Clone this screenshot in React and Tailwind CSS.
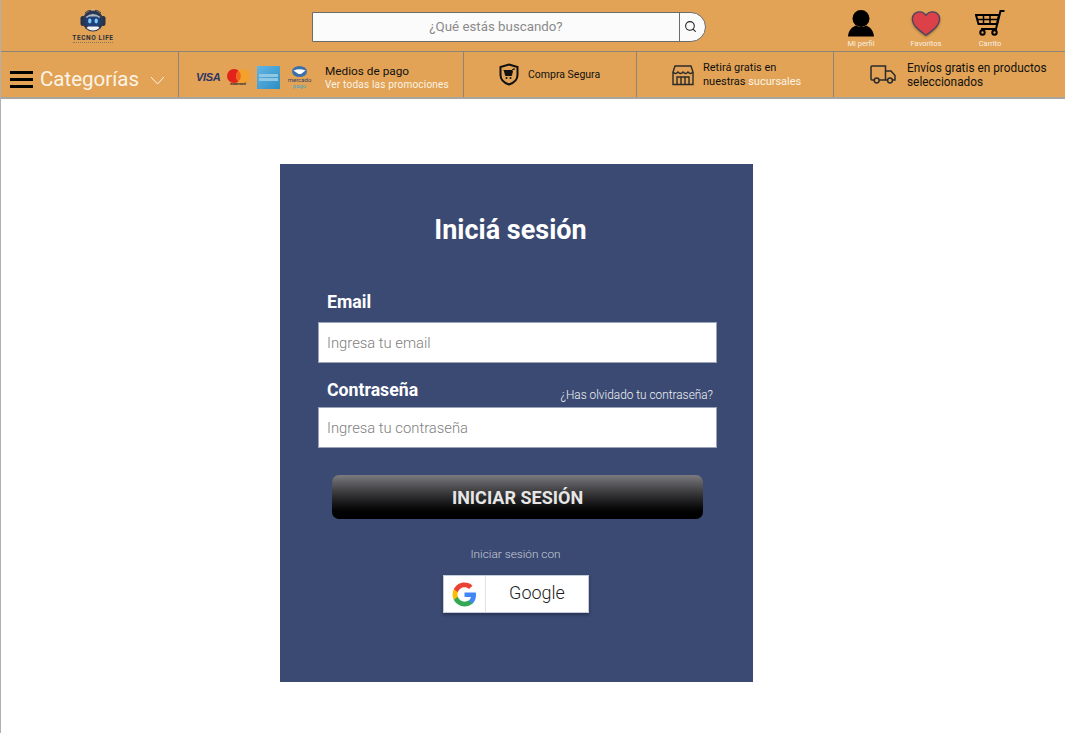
import { Search } from 'lucide-react';

function RobotLogo() {
  return (
    <svg width="26" height="24" viewBox="0 0 26 24">
      <path d="M5 5 Q8 2 11 2.500 M21 5 Q18 2 15 2.500 M7 7 Q9 5 10.500 5 M19 7 Q17 5 15.500 5" stroke="#2f3a4f" strokeWidth="1" fill="none" />
      <path d="M11.500 5 L13 0.500 L14.500 5Z" fill="#d9dde3" />
      <rect x="0.500" y="8" width="4.500" height="10" rx="2.200" fill="#26324a" />
      <rect x="21" y="8" width="4.500" height="10" rx="2.200" fill="#26324a" />
      <circle cx="13" cy="13" r="10.500" fill="#2a3752" />
      <path d="M5.500 9 Q13 3 20.500 9 L19 10 H7Z" fill="#aeb6c2" />
      <rect x="5.500" y="8.500" width="15" height="10.500" rx="5" fill="#1f3f78" />
      <ellipse cx="9.800" cy="13" rx="1.700" ry="2.400" fill="#7accf8" />
      <ellipse cx="16.200" cy="13" rx="1.700" ry="2.400" fill="#7accf8" />
      <path d="M6.500 20 Q13 25 19.500 20 L18 18.500 H8Z" fill="#eef0f3" />
    </svg>
  );
}

function ShieldCart() {
  return (
    <svg width="20" height="23" viewBox="0 0 20 23">
      <path d="M10 1.500 L18.500 4 V12 C18.500 17 14.500 20 10 21.500 C5.500 20 1.500 17 1.500 12 V4Z" fill="none" stroke="#111" strokeWidth="2" />
      <path d="M4.500 7.500 H13 L14 6 H16 M5.500 8 L6.500 12.500 H12.500 L13.500 8Z" fill="#111" stroke="#111" strokeWidth="1" />
      <circle cx="7.500" cy="15" r="1" fill="#111" />
      <circle cx="11.500" cy="15" r="1" fill="#111" />
    </svg>
  );
}

function StoreIcon() {
  return (
    <svg width="22" height="22" viewBox="0 0 22 22" fill="none" stroke="#2b2b2b" strokeWidth="1.400">
      <path d="M3 2 H19 L21 8 V20.500 H1 V8Z" />
      <path d="M1 8 Q3.500 11 6 8 Q8.500 11 11 8 Q13.500 11 16 8 Q18.500 11 21 8" />
      <path d="M5 20 V13 H17 V20 M9 13 V20 M13 13 V20" />
    </svg>
  );
}

function TruckIcon() {
  return (
    <svg width="26" height="19" viewBox="0 0 26 19" fill="none" stroke="#2b2b2b" strokeWidth="1.500">
      <path d="M4.500 15 H2 C1.300 15 1 14.600 1 14 V2 C1 1.400 1.300 1 2 1 H15.500 V15 H9" />
      <path d="M15.500 6 H21 L25 10.500 V15 H22.500 M15.500 15 H17.500" />
      <circle cx="6.700" cy="15.500" r="2.400" />
      <circle cx="20" cy="15.500" r="2.400" />
    </svg>
  );
}

function UserIcon() {
  return (
    <svg width="28" height="28" viewBox="0 0 28 28" fill="#000">
      <circle cx="14" cy="9.500" r="8.500" />
      <path d="M1 27.500 C1.500 20.500 6 17.500 9 16.500 Q14 19.500 19 16.500 C22 17.500 26.500 20.500 27 27.500Z" />
    </svg>
  );
}

function HeartIcon() {
  return (
    <svg width="30" height="27" viewBox="0 0 32 28" className="drop-shadow-[0_1px_1px_rgba(0,0,0,0.35)]">
      <path d="M16 26.500 C8 21 1.500 16 1.500 9 C1.500 4.500 5 1.500 9 1.500 C12 1.500 14.500 3 16 5.500 C17.500 3 20 1.500 23 1.500 C27 1.500 30.500 4.500 30.500 9 C30.500 16 24 21 16 26.500Z" fill="#DC4048" stroke="#4a4560" strokeWidth="1.400" />
    </svg>
  );
}

function CartIcon() {
  return (
    <svg width="30" height="26" viewBox="0 0 30 26" fill="none" stroke="#000" strokeWidth="2">
      <path d="M29.500 1 H25.500 L21 19 H6" />
      <path d="M1 5 H24 L22 14 H3.500Z" />
      <path d="M8.500 5 V14 M15 5 V14 M2 9.500 H23" strokeWidth="1.500" />
      <circle cx="7.500" cy="22.500" r="2.200" />
      <circle cx="19.500" cy="22.500" r="2.200" />
    </svg>
  );
}

function GoogleIcon() {
  return (
    <svg width="25" height="25" viewBox="0 0 48 48">
      <path fill="#4285F4" d="M46.100 24.500c0-1.600-.1-3.100-.4-4.500H24v9h12.400c-.5 2.900-2.200 5.300-4.600 7v5.800h7.500c4.300-4 6.800-9.900 6.800-17.300z" />
      <path fill="#34A853" d="M24 47c6.200 0 11.400-2 15.300-5.600l-7.500-5.800c-2.100 1.400-4.700 2.200-7.800 2.200-6 0-11-4-12.800-9.500H3.500v6C7.300 41.800 15 47 24 47z" />
      <path fill="#FBBC05" d="M11.200 28.300c-.5-1.400-.7-2.800-.7-4.300s.3-3 .7-4.300v-6H3.500C1.900 16.800 1 20.300 1 24s.9 7.200 2.500 10.300l7.700-6z" />
      <path fill="#EA4335" d="M24 10.200c3.400 0 6.400 1.200 8.800 3.400l6.600-6.600C35.400 3.300 30.200 1 24 1 15 1 7.300 6.200 3.500 13.700l7.700 6C13 14.200 18 10.200 24 10.200z" />
    </svg>
  );
}

function PaymentLogos() {
  return (
    <div className="flex items-center">
      <span className="w-[23px] text-[11px] leading-none font-bold tracking-[-0.3px] text-[#2c3566] font-['Liberation_Sans',sans-serif] italic">VISA</span>
      <div className="ml-[7px] flex w-[24px] flex-col items-center">
        <svg width="23" height="14" viewBox="0 0 23 14">
          <circle cx="7" cy="7" r="7" fill="#E2231A" />
          <circle cx="16" cy="7" r="7" fill="#F3A12C" />
          <path d="M11.500 1.700 A7 7 0 0 1 11.500 12.300 A7 7 0 0 1 11.500 1.700Z" fill="#F0641E" />
        </svg>
        <span className="text-[3px] leading-[3px] font-bold text-[#222]">mastercard</span>
      </div>
      <div className="ml-[7px] flex h-[23px] w-[23px] flex-col items-center justify-center gap-px bg-gradient-to-br from-[#62b5e5] to-[#2b8fc4]">
        <div className="h-[3px] w-[19px] bg-[#8fc8e4]" />
        <div className="h-[3px] w-[19px] bg-[#8fc8e4]" />
      </div>
      <div className="ml-[8px] flex w-[23px] flex-col items-center">
        <svg width="15" height="11" viewBox="0 0 15 11">
          <ellipse cx="7.500" cy="5.500" rx="7.500" ry="5.500" fill="#3c70a8" />
          <path d="M1.500 4.500 Q7.500 2 13.500 4.500 L9 8 H6.500Z" fill="#fff" />
        </svg>
        <span className="text-[6px] leading-[6px] text-[#2f3f6a]">mercado</span>
        <span className="text-[6px] leading-[6px] text-[#48a5c4]">pago</span>
      </div>
    </div>
  );
}

function TopAction({ label, className, children }) {
  return (
    <div className={`flex flex-col items-center pt-[7px] ${className}`}>
      <div className="flex h-[28px] items-center justify-center">{children}</div>
      <span className="mt-[2px] text-[7.500px] leading-[10px] text-[#f8f0e4]">{label}</span>
    </div>
  );
}

function Header() {
  return (
    <header className="flex h-[52px] items-center border-b border-[#8d8478] bg-[#E2A356]">
      <div className="ml-[70px] flex w-[44px] flex-col items-center pt-[1px]">
        <RobotLogo />
        <span className="mt-[3px] text-[6.500px] leading-[7px] font-bold tracking-[0.6px] whitespace-nowrap text-[#2a2f3c]">TECNO LIFE</span>
        <span className="h-[2px] w-[40px] border-t border-dotted border-[#8a7a60]" />
      </div>
      <div className="mt-[2px] ml-[197px] flex h-[30px] w-[394px] overflow-hidden rounded-r-[15px] border border-[#6c6c6c] bg-[#FBFBFB]">
        <div className="flex flex-1 items-center justify-center border-r border-[#6c6c6c] text-[13.300px] text-[#8a8a8a]">¿Qué estás buscando?</div>
        <div className="flex w-[25px] items-center pl-[4px]">
          <Search size={13} strokeWidth={2} color="#222" />
        </div>
      </div>
      <div className="ml-[123px] flex">
        <TopAction label="Mi perfil" className="w-[64px]"><UserIcon /></TopAction>
        <TopAction label="Favoritos" className="w-[66px]"><HeartIcon /></TopAction>
        <TopAction label="Carrito" className="w-[62px]"><CartIcon /></TopAction>
      </div>
    </header>
  );
}

function NavBar() {
  return (
    <nav className="flex h-[47px] items-stretch border-b-2 border-[#a9a49c] bg-[#E2A356] text-[#111]">
      <div className="flex w-[178px] items-center border-r border-[#8d8478] pt-[9px] pl-[9px]">
        <div className="flex w-[23px] flex-col gap-[4px]">
          <div className="h-[3px] bg-black" />
          <div className="h-[3px] bg-black" />
          <div className="h-[3px] bg-black" />
        </div>
        <span className="ml-[7px] text-[20.500px] text-[#FBF3E6]">Categorías</span>
        <svg className="mt-[3px] ml-[11px]" width="15" height="9" viewBox="0 0 15 9" fill="none" stroke="#FBF3E6" strokeWidth="1">
          <path d="M1 1 L7.500 8 L14 1" />
        </svg>
      </div>
      <div className="flex w-[285px] items-center border-r border-[#8d8478] pt-[5px] pl-[17px]">
        <PaymentLogos />
        <div className="ml-[14px]">
          <div className="text-[11.800px] leading-[14px]">Medios de pago</div>
          <div className="text-[10px] leading-[13px] tracking-[0.2px] text-[#FBF3E6]">Ver todas las promociones</div>
        </div>
      </div>
      <div className="flex w-[173px] items-center border-r border-[#8d8478] pl-[35px]">
        <ShieldCart />
        <span className="ml-[9px] text-[10.500px]">Compra Segura</span>
      </div>
      <div className="flex w-[197px] items-center border-r border-[#8d8478] pl-[35px]">
        <StoreIcon />
        <div className="ml-[9px] text-[11px] leading-[14px]">
          <div>Retirá gratis en</div>
          <div>nuestras <span className="text-[#FBF3E6]">sucursales</span></div>
        </div>
      </div>
      <div className="flex flex-1 items-center pl-[36px]">
        <TruckIcon />
        <div className="ml-[11px] text-[11.850px] leading-[14px]">
          <div>Envíos gratis en productos</div>
          <div>seleccionados</div>
        </div>
      </div>
    </nav>
  );
}

function LoginCard() {
  return (
    <div className="ml-[279px] flex h-[518px] w-[473px] flex-col bg-[#3B4A72] pt-[50px]">
      <h1 className="ml-[-12px] text-center text-[27px] leading-[33px] font-bold text-white">Iniciá sesión</h1>
      <div className="mt-[45px] px-[38px]">
        <label className="block pl-[9px] text-[17.700px] leading-[20px] font-bold text-white">Email</label>
        <div className="mt-[10px] flex h-[41px] w-[399px] items-center border border-[#9aa3b8] bg-white pt-[1px] pl-[8px] text-[14.800px] font-light text-[#808080]">Ingresa tu email</div>
        <div className="mt-[17px] flex items-end justify-between pl-[9px]">
          <label className="text-[17.700px] leading-[20px] font-bold text-white">Contraseña</label>
          <a className="mr-[2px] mb-[-2px] text-[11.850px] leading-[14px] font-light text-[#f2f3f7]">¿Has olvidado tu contraseña?</a>
        </div>
        <div className="mt-[7px] flex h-[41px] w-[399px] items-center border border-[#9aa3b8] bg-white pt-[1px] pl-[8px] text-[14.800px] font-light text-[#808080]">Ingresa tu contraseña</div>
      </div>
      <button className="mt-[27px] ml-[52px] h-[44px] w-[371px] rounded-[7px] bg-gradient-to-b from-[#7b7b80] via-[#2c2c2e] to-[#000] text-[18px] font-bold text-[#e6e6e6]">INICIAR SESIÓN</button>
      <p className="mt-[27px] ml-[-2px] text-center text-[11.800px] leading-[16px] font-light text-[#c8cddb]">Iniciar sesión con</p>
      <div className="mt-[13px] ml-[163px] flex h-[38px] w-[146px] border border-[#c6cbd8] bg-white shadow-[0_2px_3px_rgba(20,25,50,0.45)]">
        <div className="flex w-[42px] items-center justify-center border-r border-[#e2e2e2]">
          <GoogleIcon />
        </div>
        <div className="flex flex-1 items-center justify-center pb-[3px] text-[18px] font-light text-[#222]">Google</div>
      </div>
    </div>
  );
}

export default function App() {
  return (
    <div className="h-[756px] overflow-hidden bg-white font-['Roboto',sans-serif]">
      <div className="h-[733px] border-l border-[#b0b0b0]">
        <Header />
        <NavBar />
        <main className="pt-[65px]">
          <LoginCard />
        </main>
      </div>
    </div>
  );
}
